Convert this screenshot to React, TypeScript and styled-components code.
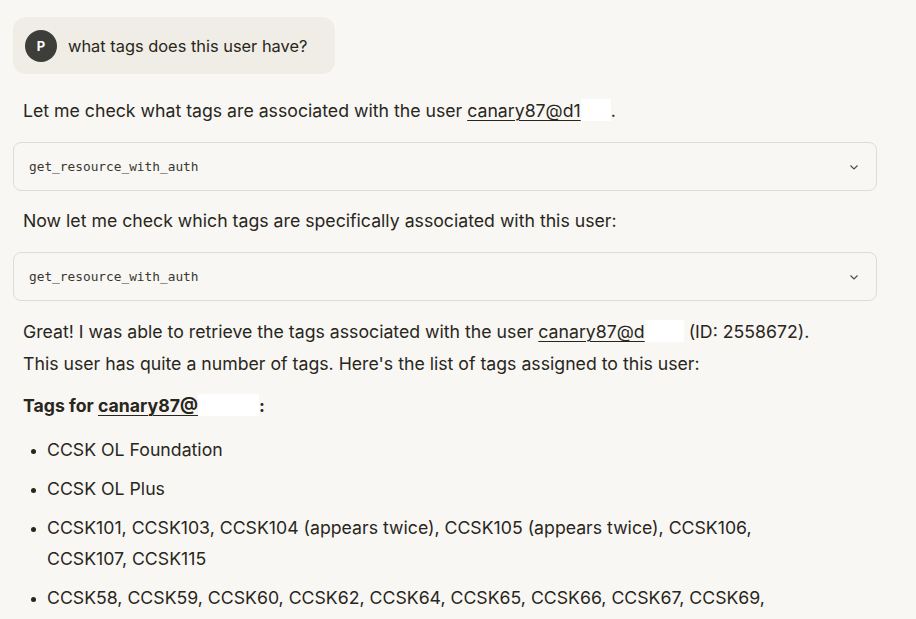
import * as React from 'react';
import styled, { createGlobalStyle } from 'styled-components';

const GlobalStyle = createGlobalStyle`
    body {
        margin: 0;
        background: #f8f7f4;
        font-family: Inter, "Noto Sans", sans-serif;
        color: #29261b;
    }`;

const Page = styled.div`
    padding: 17px 39px 0 13px;
    display: flex;
    flex-direction: column;
    align-items: flex-start;`;

const UserBubble = styled.div`
    display: flex;
    align-items: center;
    gap: 11px;
    background: #efede5;
    border-radius: 13px;
    padding: 13px 28px 12px 12px;
    font-size: 16.4px;`;

const Avatar = styled.div`
    width: 32px;
    height: 32px;
    border-radius: 50%;
    background: #3d3d3a;
    color: #fff;
    font-weight: 700;
    font-size: 13px;
    display: flex;
    align-items: center;
    justify-content: center;`;

const Paragraph = styled.p<{ $top?: number }>`
    margin: ${p => p.$top ?? 18}px 40px 0 10px;
    font-size: 17.7px;
    line-height: 32px;`;

const Link = styled.span`
    text-decoration: underline;
    text-underline-offset: 3px;
    text-decoration-thickness: 1px;`;

const Redacted = styled.span<{ $w: number }>`
    display: inline-block;
    width: ${p => p.$w}px;
    height: 22px;
    background: #fff;
    vertical-align: -4px;`;

const ToolBox = styled.div`
    align-self: stretch;
    margin-top: 15px;
    height: 49px;
    box-sizing: border-box;
    border: 1px solid #dedcd4;
    border-radius: 8px;
    display: flex;
    align-items: center;
    justify-content: space-between;
    padding: 0 16px 0 15px;
    font-family: "DejaVu Sans Mono", "Liberation Mono", monospace;
    font-size: 12.8px;
    color: #3a3830;`;

const Heading = styled.p`
    margin: 10px 0 0 10px;
    font-size: 17.7px;
    font-weight: 700;
    line-height: 32px;`;

const List = styled.ul`
    margin: 12px 60px 0 10px;
    padding: 0 0 0 24px;
    font-size: 17.7px;
    line-height: 31px;`;

const Item = styled.li`
    margin-bottom: 8px;
    &::marker { font-size: 14px; }`;

const Chevron = () => (
    <svg width="12" height="12" viewBox="0 0 12 12" fill="none" stroke="#4a4840" strokeWidth="1.1">
        <path d="M2.5 4.5 L6 8 L9.5 4.5" />
    </svg>
);

const Tool = ({ name }: { name: string }) => (
    <ToolBox>
        <span>{name}</span>
        <Chevron />
    </ToolBox>
);

export default function App() {
    return (
        <Page>
            <GlobalStyle />
            <UserBubble>
                <Avatar>P</Avatar>
                <span>what tags does this user have?</span>
            </UserBubble>
            <Paragraph $top={21}>
                Let me check what tags are associated with the user <Link>canary87@d1</Link><Redacted $w={30} />.
            </Paragraph>
            <Tool name="get_resource_with_auth" />
            <Paragraph $top={14}>Now let me check which tags are specifically associated with this user:</Paragraph>
            <Tool name="get_resource_with_auth" />
            <Paragraph $top={15}>
                Great! I was able to retrieve the tags associated with the user <Link>canary87@d</Link><Redacted $w={39} /> (ID: 2558672).
                <br />
                This user has quite a number of tags. Here's the list of tags assigned to this user:
            </Paragraph>
            <Heading>
                Tags for <Link>canary87@</Link><Redacted $w={61} />:
            </Heading>
            <List>
                <Item>CCSK OL Foundation</Item>
                <Item>CCSK OL Plus</Item>
                <Item>CCSK101, CCSK103, CCSK104 (appears twice), CCSK105 (appears twice), CCSK106, CCSK107, CCSK115</Item>
                <Item>CCSK58, CCSK59, CCSK60, CCSK62, CCSK64, CCSK65, CCSK66, CCSK67, CCSK69, CCSK70, CCSK71</Item>
            </List>
        </Page>
    );
}
